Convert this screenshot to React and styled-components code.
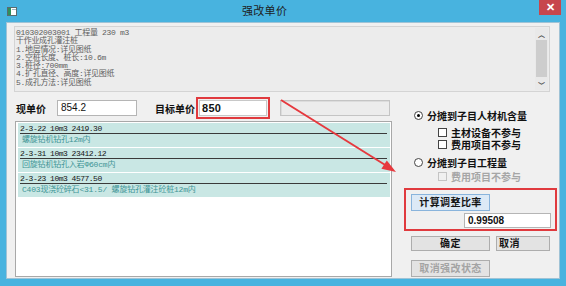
import React from "react";
import styled, { createGlobalStyle } from "styled-components";

const GlobalStyle = createGlobalStyle`
  html, body {
    margin: 0;
    padding: 0;
    background: #48b3df;
  }
  * {
    box-sizing: border-box;
  }
`;

const CN = `"Liberation Mono", "Noto Sans CJK SC", monospace`;
const UI = `"Liberation Sans", "Noto Sans CJK SC", sans-serif`;

const Window = styled.div`
  position: relative;
  width: 566px;
  height: 286px;
  background: #48b3df;
  display: flex;
  flex-direction: column;
  font-family: ${UI};
  overflow: hidden;
`;

const TitleBar = styled.div`
  height: 22px;
  display: flex;
  align-items: flex-start;
  position: relative;
`;

const AppIcon = styled.svg`
  margin: 7px 0 0 7px;
  width: 10px;
  height: 9px;
`;

const Title = styled.div`
  position: absolute;
  left: 242px;
  top: 3px;
  font-size: 11px;
  line-height: 16px;
  color: #1d1d1d;
  letter-spacing: 0.3px;
`;

const CloseButton = styled.div`
  margin-left: auto;
  margin-right: 5px;
  width: 22px;
  height: 15px;
  background: #c7464c;
  color: #fff;
  font-size: 11px;
  font-weight: bold;
  line-height: 15px;
  text-align: center;
`;

const Client = styled.div`
  margin: 0 6px 7px 6px;
  flex: 1;
  background: #f0f0f0;
  border: 1px solid #9fc3d6;
  padding: 3px 0 0 7px;
`;

const Memo = styled.div`
  width: 536px;
  height: 66px;
  border: 1px solid #d4d4d4;
  background: #ececec;
  display: flex;
`;

const MemoText = styled.pre`
  flex: 1;
  margin: 0;
  padding: 2px 0 0 1px;
  font-family: ${CN};
  font-size: 8px;
  line-height: 8.3px;
  color: #5e5e5e;
  letter-spacing: -0.3px;
`;

const ScrollBar = styled.div`
  width: 13px;
  margin: 1px 1px 1px 0;
  background: #e9e9e9;
  display: flex;
  flex-direction: column;
  align-items: center;
`;

const ScrollArrow = styled.div`
  height: 11px;
  width: 100%;
  display: flex;
  align-items: center;
  justify-content: center;
  color: #505050;
  font-size: 7px;
  font-weight: bold;
`;

const ScrollThumb = styled.div`
  width: 11px;
  height: 37px;
  margin-top: 1px;
  background: #cdcdcd;
`;

const Body = styled.div`
  display: flex;
  margin-top: 5px;
`;

const LeftColumn = styled.div`
  width: 378px;
  display: flex;
  flex-direction: column;
`;

const PriceRow = styled.div`
  height: 22px;
  display: flex;
  align-items: center;
`;

const Label = styled.div`
  margin-left: ${p => p.$ml}px;
  width: ${p => p.$w}px;
  font-family: ${UI};
  font-size: 10px;
  font-weight: bold;
  color: #111;
  white-space: nowrap;
`;

const PriceInput = styled.div`
  margin-left: ${p => p.$ml}px;
  width: ${p => p.$w}px;
  height: 16px;
  background: #fff;
  border: 1px solid #b5b5b5;
  font-size: 10px;
  line-height: 14px;
  padding-left: 3px;
  color: #111;
`;

const Highlight = styled.div`
  margin-left: ${p => p.$ml}px;
  width: ${p => p.$w}px;
  height: 22px;
  border: 2px solid #e03a3e;
  padding: 1px;
  display: flex;
`;

const InnerInput = styled.div`
  flex: 1;
  background: #fff;
  border: 1px solid #c8c8c8;
  font-size: 11px;
  font-weight: bold;
  line-height: 14px;
  padding-left: 2px;
  color: #111;
  letter-spacing: 0.3px;
`;

const DisabledBox = styled.div`
  margin-left: 10px;
  width: 110px;
  height: 16px;
  border: 1px solid #c4c4c4;
  box-shadow: inset 1px 1px 0 #dcdcdc;
  background: #ececec;
`;

const ListBox = styled.div`
  margin: 2px 0 0 1px;
  width: 377px;
  height: 156px;
  border: 1px solid #a8a8a8;
  background: #fff;
  padding: 1px 0 0 2px;
  display: flex;
  flex-direction: column;
  gap: 1px;
`;

const Item = styled.div`
  width: 372px;
  height: 24px;
  background: #c9e7e4;
  padding-top: 1px;
`;

const ItemHead = styled.div`
  height: 9px;
  line-height: 9px;
  padding-left: 2px;
  font-family: ${CN};
  font-size: 8px;
  letter-spacing: -0.5px;
  color: #151515;
`;

const ItemRule = styled.div`
  height: 1px;
  margin: 0 3px 0 2px;
  background: #3a3a3a;
`;

const ItemDesc = styled.div`
  height: 12px;
  line-height: 12px;
  padding-left: 4px;
  font-family: ${CN};
  font-size: 8px;
  letter-spacing: -0.2px;
  color: #3f9596;
`;

const RightColumn = styled.div`
  margin-left: 12px;
  width: 153px;
  display: flex;
  flex-direction: column;
`;

const OptionRow = styled.div`
  height: 12px;
  margin-top: ${p => p.$mt || 0}px;
  padding-left: ${p => p.$indent}px;
  display: flex;
  align-items: center;
  gap: 4px;
  font-size: 10px;
  font-weight: bold;
  color: ${p => (p.$disabled ? "#a6a6a6" : "#111")};
  white-space: nowrap;
`;

const Radio = styled.span`
  width: 9px;
  height: 9px;
  border-radius: 50%;
  border: 1px solid #444;
  background: #fff;
  display: flex;
  align-items: center;
  justify-content: center;
  &::after {
    content: "";
    width: 3px;
    height: 3px;
    border-radius: 50%;
    background: ${p => (p.$checked ? "#000" : "transparent")};
  }
`;

const Check = styled.span`
  width: 9px;
  height: 9px;
  border: 1px solid ${p => (p.$disabled ? "#c4c4c4" : "#444")};
  background: ${p => (p.$disabled ? "#f0f0f0" : "#fff")};
`;

const RatioBox = styled.div`
  margin-top: 6px;
  width: 153px;
  height: 43px;
  border: 2px solid #e03a3e;
  padding: 4px 4px 0 5px;
  display: flex;
  flex-direction: column;
`;

const Button = styled.div`
  width: ${p => p.$w}px;
  height: ${p => p.$h}px;
  margin-left: ${p => p.$ml || 0}px;
  background: ${p => (p.$accent ? "#dce9f6" : "#e3e3e3")};
  border: 1px solid ${p => (p.$accent ? "#89b4dc" : "#adadad")};
  font-size: 10px;
  font-weight: bold;
  line-height: ${p => p.$h - 2}px;
  text-align: ${p => p.$align || "center"};
  padding-left: ${p => (p.$align ? 2 : 0)}px;
  color: ${p => (p.$disabled ? "#a3a3a3" : "#151515")};
  letter-spacing: 0.4px;
  white-space: nowrap;
`;

const RatioInput = styled.div`
  align-self: flex-end;
  margin-top: 2px;
  width: 87px;
  height: 15px;
  background: #fff;
  border: 1px solid #b5b5b5;
  font-size: 10px;
  font-weight: bold;
  line-height: 13px;
  padding-left: 3px;
  color: #111;
`;

const ButtonRow = styled.div`
  display: flex;
  margin-top: ${p => p.$mt}px;
  padding-left: 7px;
`;

const Overlay = styled.svg`
  position: absolute;
  left: 0;
  top: 0;
  pointer-events: none;
`;

const memo = `010302003001 工程量 230 m3
干作业成孔灌注桩
1.地层情况:详见图纸
2.空桩长度、桩长:10.6m
3.桩径:700mm
4.扩孔直径、高度:详见图纸
5.成孔方法:详见图纸`;

const items = [
  { head: "2-3-22 10m3 2419.30", desc: "螺旋钻机钻孔12m内" },
  { head: "2-3-31 10m3 23412.12", desc: "回旋钻机钻孔入岩Φ60cm内" },
  { head: "2-3-23 10m3 4577.50", desc: "C403现浇砼碎石<31.5/ 螺旋钻孔灌注砼桩12m内" }
];

export default function App() {
  return (
    <Window>
      <GlobalStyle />
      <TitleBar>
        <AppIcon viewBox="0 0 10 9">
          <rect x="0.5" y="0.5" width="9" height="8" fill="#fff" stroke="#5a6b70" />
          <rect x="1" y="1" width="3" height="7" fill="#2f8f5b" />
          <rect x="5" y="2" width="4" height="1" fill="#9fb7c0" />
        </AppIcon>
        <Title>强改单价</Title>
        <CloseButton>✕</CloseButton>
      </TitleBar>
      <Client>
        <Memo>
          <MemoText>{memo}</MemoText>
          <ScrollBar>
            <ScrollArrow>︿</ScrollArrow>
            <ScrollThumb />
            <div style={{ flex: 1 }} />
            <ScrollArrow>﹀</ScrollArrow>
          </ScrollBar>
        </Memo>
        <Body>
          <LeftColumn>
            <PriceRow>
              <Label $ml={2} $w={30}>现单价</Label>
              <PriceInput $ml={11} $w={80}>854.2</PriceInput>
              <Label $ml={18} $w={40}>目标单价</Label>
              <Highlight $ml={1} $w={74}>
                <InnerInput>850</InnerInput>
              </Highlight>
              <DisabledBox />
            </PriceRow>
            <ListBox>
              {items.map(it => (
                <Item key={it.head}>
                  <ItemHead>{it.head}</ItemHead>
                  <ItemRule />
                  <ItemDesc>{it.desc}</ItemDesc>
                </Item>
              ))}
            </ListBox>
          </LeftColumn>
          <RightColumn>
            <OptionRow $mt={12} $indent={10}>
              <Radio $checked />
              分摊到子目人材机含量
            </OptionRow>
            <OptionRow $mt={5} $indent={34}>
              <Check />
              主材设备不参与
            </OptionRow>
            <OptionRow $indent={34}>
              <Check />
              费用项目不参与
            </OptionRow>
            <OptionRow $mt={6} $indent={10}>
              <Radio />
              分摊到子目工程量
            </OptionRow>
            <OptionRow $mt={2} $indent={34} $disabled>
              <Check $disabled />
              费用项目不参与
            </OptionRow>
            <RatioBox>
              <Button $accent $w={79} $h={17}>计算调整比率</Button>
              <RatioInput>0.99508</RatioInput>
            </RatioBox>
            <ButtonRow $mt={5}>
              <Button $w={79} $h={15}>确定</Button>
              <Button $w={54} $h={15} $ml={6} $align="left">取消</Button>
            </ButtonRow>
            <ButtonRow $mt={9}>
              <Button $w={79} $h={17} $disabled>取消强改状态</Button>
            </ButtonRow>
          </RightColumn>
        </Body>
      </Client>
      <Overlay width="566" height="286" viewBox="0 0 566 286">
        <line x1="281" y1="100" x2="386" y2="165.5" stroke="#e6393e" strokeWidth="2" />
        <polygon points="396,172 381.4,168.8 386.8,160.4" fill="#e6393e" />
      </Overlay>
    </Window>
  );
}
